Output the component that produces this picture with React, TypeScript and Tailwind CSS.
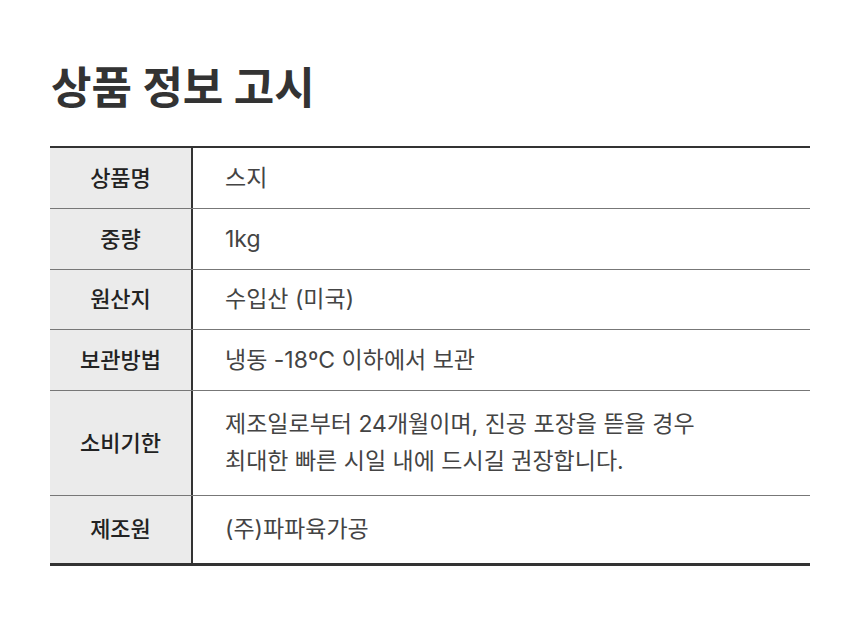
const rows: { label: string; value: string[]; h: string }[] = [
  { label: "상품명", value: ["스지"], h: "h-[61px]" },
  { label: "중량", value: ["1kg"], h: "h-[61px]" },
  { label: "원산지", value: ["수입산 (미국)"], h: "h-[60px]" },
  { label: "보관방법", value: ["냉동 -18ºC 이하에서 보관"], h: "h-[61px]" },
  {
    label: "소비기한",
    value: [
      "제조일로부터 24개월이며, 진공 포장을 뜯을 경우",
      "최대한 빠른 시일 내에 드시길 권장합니다.",
    ],
    h: "h-[105px]",
  },
  { label: "제조원", value: ["(주)파파육가공"], h: "h-[67px]" },
];

export default function App() {
  return (
    <div
      className="w-[860px] h-[617px] bg-white px-[50px] pt-[56px]"
      style={{ fontFamily: 'Inter, "Noto Sans CJK KR", sans-serif' }}
    >
      <h1 className="text-[44px] leading-[64px] font-bold text-[#333] pl-[1px]">
        상품 정보 고시
      </h1>
      <div className="mt-[26px] border-t-2 border-b-[3px] border-[#333]">
        {rows.map((r, i) => (
          <div
            key={r.label}
            className={`flex ${r.h} ${i < rows.length - 1 ? "border-b border-[#777]" : ""}`}
          >
            <div className="w-[143px] shrink-0 bg-[#ebebeb] border-r-2 border-[#333] flex items-center justify-center text-[22px] font-medium text-[#222]">
              {r.label}
            </div>
            <div className="flex-1 flex flex-col justify-center pl-[32px] text-[23px] leading-[37px] text-[#444]">
              {r.value.map((v) => (
                <p key={v}>{v}</p>
              ))}
            </div>
          </div>
        ))}
      </div>
    </div>
  );
}
